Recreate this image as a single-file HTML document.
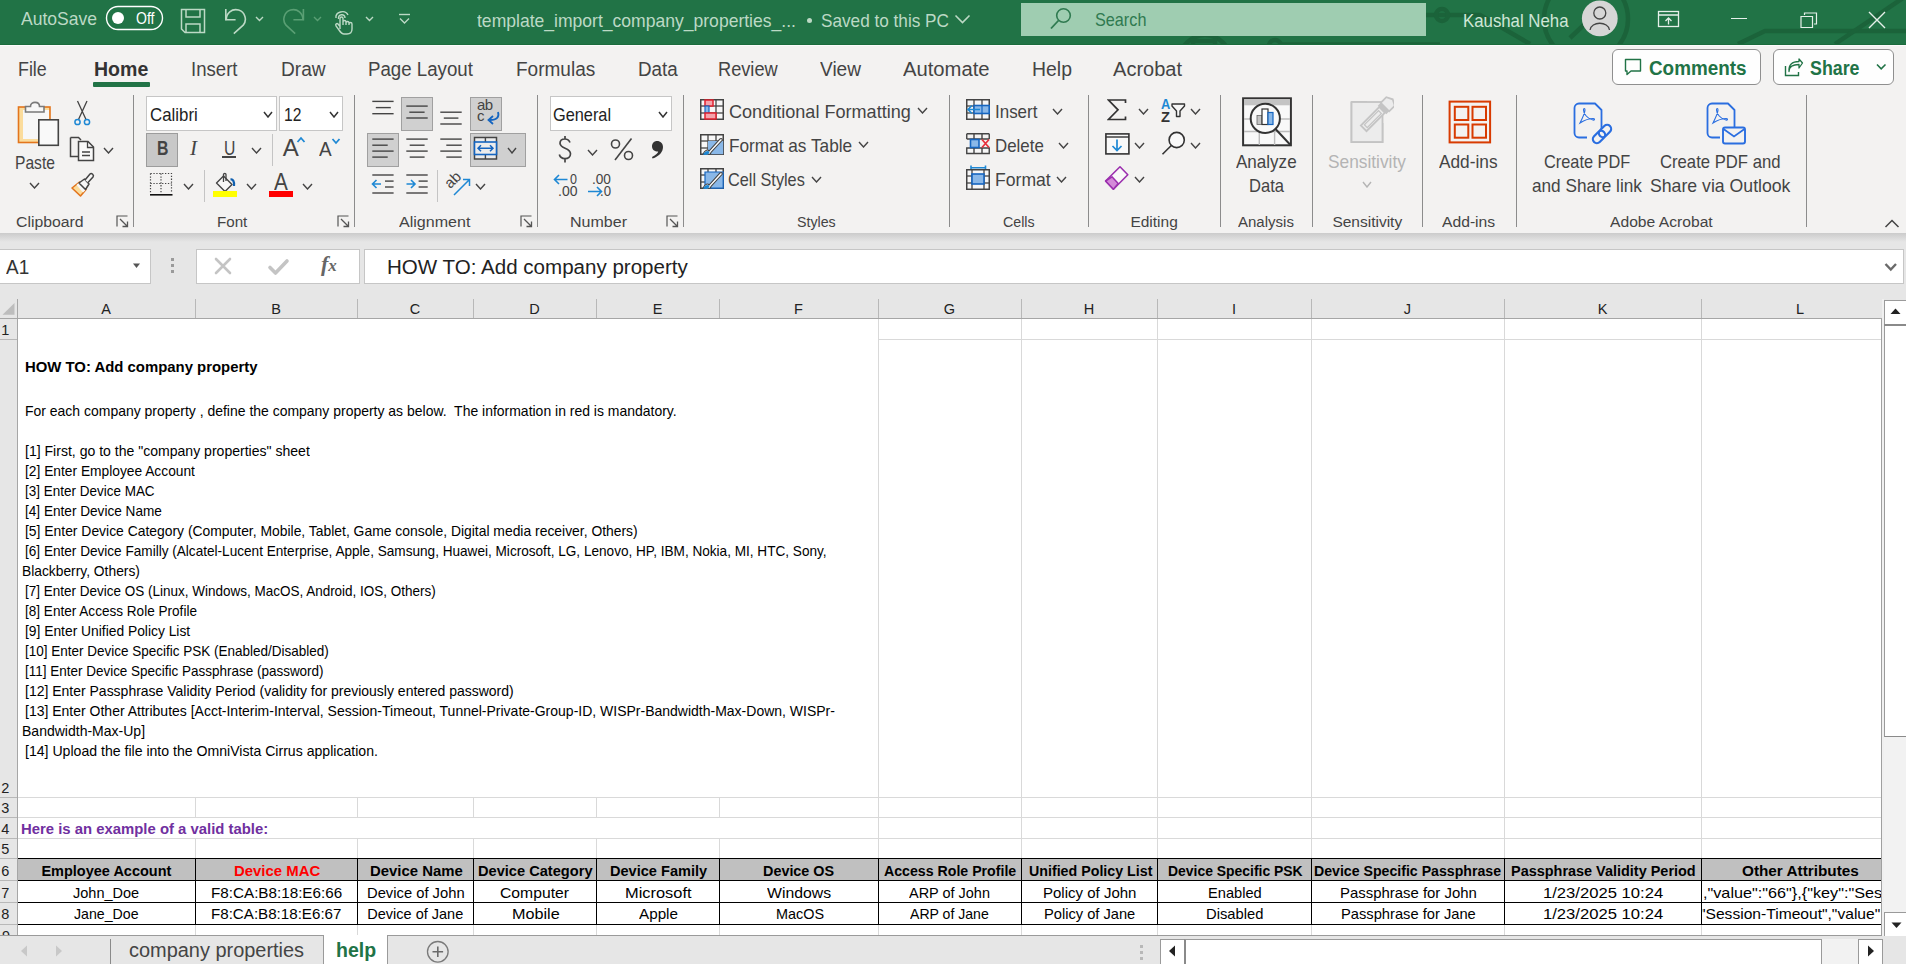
<!DOCTYPE html><html><head><meta charset="utf-8"><style>
*{margin:0;padding:0}
html,body{width:1906px;height:964px;overflow:hidden;background:#fff;position:relative}
body>div{position:absolute}
.t{position:absolute;white-space:pre;font-family:"Liberation Sans",sans-serif;transform-origin:0 0}
svg{position:absolute}
</style></head><body>
<div style="left:0px;top:0px;width:1906px;height:44px;background:#217346"></div>
<div style="left:0px;top:44px;width:1906px;height:1px;background:#1b6b3c"></div>
<div style="left:0px;top:45px;width:1906px;height:188px;background:#f3f2f1"></div>
<div style="left:0px;top:233px;width:1906px;height:9px;background:linear-gradient(#cbcbcb,#e6e6e6)"></div>
<div style="left:0px;top:242px;width:1906px;height:77px;background:#e6e6e6"></div>
<div style="left:0px;top:299px;width:1884px;height:20px;background:#e6e6e6"></div>
<div style="left:18px;top:319px;width:1863px;height:617px;background:#fff"></div>
<div style="left:0px;top:318px;width:1882px;height:1px;background:#a6a6a6"></div>
<div style="left:195px;top:299px;width:1px;height:19px;background:#b8b8b8"></div>
<div style="left:357px;top:299px;width:1px;height:19px;background:#b8b8b8"></div>
<div style="left:473px;top:299px;width:1px;height:19px;background:#b8b8b8"></div>
<div style="left:596px;top:299px;width:1px;height:19px;background:#b8b8b8"></div>
<div style="left:719px;top:299px;width:1px;height:19px;background:#b8b8b8"></div>
<div style="left:878px;top:299px;width:1px;height:19px;background:#b8b8b8"></div>
<div style="left:1021px;top:299px;width:1px;height:19px;background:#b8b8b8"></div>
<div style="left:1157px;top:299px;width:1px;height:19px;background:#b8b8b8"></div>
<div style="left:1311px;top:299px;width:1px;height:19px;background:#b8b8b8"></div>
<div style="left:1504px;top:299px;width:1px;height:19px;background:#b8b8b8"></div>
<div style="left:1701px;top:299px;width:1px;height:19px;background:#b8b8b8"></div>
<svg style="left:1px;top:302px" width="15" height="14"><path d="M13.5 1 L13.5 12.8 L1.5 12.8 Z" fill="#bdbdbd"/></svg>
<div style="left:0px;top:319px;width:17px;height:617px;background:#e6e6e6"></div>
<div style="left:17px;top:299px;width:1px;height:637px;background:#a6a6a6"></div>
<div style="left:0px;top:339px;width:17px;height:1px;background:#b8b8b8"></div>
<div style="left:0px;top:797px;width:17px;height:1px;background:#b8b8b8"></div>
<div style="left:0px;top:817px;width:17px;height:1px;background:#b8b8b8"></div>
<div style="left:0px;top:838px;width:17px;height:1px;background:#b8b8b8"></div>
<div style="left:0px;top:858px;width:17px;height:1px;background:#b8b8b8"></div>
<div style="left:0px;top:880px;width:17px;height:1px;background:#b8b8b8"></div>
<div style="left:0px;top:902px;width:17px;height:1px;background:#b8b8b8"></div>
<div style="left:0px;top:924px;width:17px;height:1px;background:#b8b8b8"></div>
<div style="left:878px;top:339px;width:1003px;height:1px;background:#d9d9d9"></div>
<div style="left:18px;top:797px;width:1863px;height:1px;background:#d9d9d9"></div>
<div style="left:18px;top:817px;width:1863px;height:1px;background:#d9d9d9"></div>
<div style="left:18px;top:838px;width:1863px;height:1px;background:#d9d9d9"></div>
<div style="left:18px;top:935px;width:0px;height:1px;background:#d9d9d9"></div>
<div style="left:195px;top:797px;width:1px;height:21px;background:#d9d9d9"></div>
<div style="left:195px;top:838px;width:1px;height:20px;background:#d9d9d9"></div>
<div style="left:195px;top:924px;width:1px;height:12px;background:#d9d9d9"></div>
<div style="left:357px;top:797px;width:1px;height:21px;background:#d9d9d9"></div>
<div style="left:357px;top:838px;width:1px;height:20px;background:#d9d9d9"></div>
<div style="left:357px;top:924px;width:1px;height:12px;background:#d9d9d9"></div>
<div style="left:473px;top:797px;width:1px;height:21px;background:#d9d9d9"></div>
<div style="left:473px;top:838px;width:1px;height:20px;background:#d9d9d9"></div>
<div style="left:473px;top:924px;width:1px;height:12px;background:#d9d9d9"></div>
<div style="left:596px;top:797px;width:1px;height:21px;background:#d9d9d9"></div>
<div style="left:596px;top:838px;width:1px;height:20px;background:#d9d9d9"></div>
<div style="left:596px;top:924px;width:1px;height:12px;background:#d9d9d9"></div>
<div style="left:719px;top:797px;width:1px;height:21px;background:#d9d9d9"></div>
<div style="left:719px;top:838px;width:1px;height:20px;background:#d9d9d9"></div>
<div style="left:719px;top:924px;width:1px;height:12px;background:#d9d9d9"></div>
<div style="left:878px;top:319px;width:1px;height:539px;background:#d9d9d9"></div>
<div style="left:878px;top:924px;width:1px;height:12px;background:#d9d9d9"></div>
<div style="left:1021px;top:319px;width:1px;height:539px;background:#d9d9d9"></div>
<div style="left:1021px;top:924px;width:1px;height:12px;background:#d9d9d9"></div>
<div style="left:1157px;top:319px;width:1px;height:539px;background:#d9d9d9"></div>
<div style="left:1157px;top:924px;width:1px;height:12px;background:#d9d9d9"></div>
<div style="left:1311px;top:319px;width:1px;height:539px;background:#d9d9d9"></div>
<div style="left:1311px;top:924px;width:1px;height:12px;background:#d9d9d9"></div>
<div style="left:1504px;top:319px;width:1px;height:539px;background:#d9d9d9"></div>
<div style="left:1504px;top:924px;width:1px;height:12px;background:#d9d9d9"></div>
<div style="left:1701px;top:319px;width:1px;height:539px;background:#d9d9d9"></div>
<div style="left:1701px;top:924px;width:1px;height:12px;background:#d9d9d9"></div>
<div style="left:1881px;top:319px;width:1px;height:617px;background:#a0a0a0"></div>
<div style="left:1882px;top:299px;width:2px;height:637px;background:#f0f0f0"></div>
<div style="left:18px;top:858px;width:1863px;height:22px;background:#c0c0c0"></div>
<div style="left:18px;top:858px;width:1863px;height:1px;background:#000"></div>
<div style="left:18px;top:880px;width:1863px;height:1px;background:#000"></div>
<div style="left:18px;top:902px;width:1863px;height:1px;background:#000"></div>
<div style="left:18px;top:924px;width:1863px;height:1px;background:#000"></div>
<div style="left:195px;top:858px;width:1px;height:67px;background:#000"></div>
<div style="left:357px;top:858px;width:1px;height:67px;background:#000"></div>
<div style="left:473px;top:858px;width:1px;height:67px;background:#000"></div>
<div style="left:596px;top:858px;width:1px;height:67px;background:#000"></div>
<div style="left:719px;top:858px;width:1px;height:67px;background:#000"></div>
<div style="left:878px;top:858px;width:1px;height:67px;background:#000"></div>
<div style="left:1021px;top:858px;width:1px;height:67px;background:#000"></div>
<div style="left:1157px;top:858px;width:1px;height:67px;background:#000"></div>
<div style="left:1311px;top:858px;width:1px;height:67px;background:#000"></div>
<div style="left:1504px;top:858px;width:1px;height:67px;background:#000"></div>
<div style="left:1701px;top:858px;width:1px;height:67px;background:#000"></div>
<div style="left:0px;top:935px;width:1882px;height:1px;background:#c6c6c6"></div>
<div style="left:1884px;top:300px;width:22px;height:636px;background:#f2f2f2"></div>
<div style="left:1884px;top:300px;width:22px;height:25px;background:#fff;border-left:1px solid #9a9a9a;border-top:1px solid #9a9a9a;box-sizing:border-box"></div>
<div style="left:1884px;top:324px;width:22px;height:2px;background:#8a8a8a"></div>
<div style="left:1884px;top:326px;width:22px;height:411px;background:#fff;border-left:1px solid #9a9a9a;border-bottom:1px solid #8a8a8a;box-sizing:border-box"></div>
<div style="left:1884px;top:912px;width:22px;height:24px;background:#fff;border-left:1px solid #9a9a9a;border-top:1px solid #9a9a9a;box-sizing:border-box"></div>
<svg style="left:1890px;top:308px" width="12" height="7"><path d="M0.5 6 L5.5 0.5 L10.5 6 Z" fill="#222"/></svg>
<svg style="left:1891px;top:922px" width="12" height="7"><path d="M0.5 0.5 L10.5 0.5 L5.5 6 Z" fill="#222"/></svg>
<div style="left:0px;top:936px;width:1906px;height:28px;background:#e6e6e6"></div>
<div class="t" style="left:101.15px;top:302.00px;font-size:14.5px;line-height:14.5px;color:#222;">A</div>
<div class="t" style="left:271.15px;top:302.00px;font-size:14.5px;line-height:14.5px;color:#222;">B</div>
<div class="t" style="left:409.75px;top:302.00px;font-size:14.5px;line-height:14.5px;color:#222;">C</div>
<div class="t" style="left:529.25px;top:302.00px;font-size:14.5px;line-height:14.5px;color:#222;">D</div>
<div class="t" style="left:652.65px;top:302.00px;font-size:14.5px;line-height:14.5px;color:#222;">E</div>
<div class="t" style="left:794.05px;top:302.00px;font-size:14.5px;line-height:14.5px;color:#222;">F</div>
<div class="t" style="left:943.85px;top:302.00px;font-size:14.5px;line-height:14.5px;color:#222;">G</div>
<div class="t" style="left:1083.75px;top:302.00px;font-size:14.5px;line-height:14.5px;color:#222;">H</div>
<div class="t" style="left:1232.00px;top:302.00px;font-size:14.5px;line-height:14.5px;color:#222;">I</div>
<div class="t" style="left:1403.85px;top:302.00px;font-size:14.5px;line-height:14.5px;color:#222;">J</div>
<div class="t" style="left:1597.65px;top:302.00px;font-size:14.5px;line-height:14.5px;color:#222;">K</div>
<div class="t" style="left:1795.95px;top:302.00px;font-size:14.5px;line-height:14.5px;color:#222;">L</div>
<div class="t" style="left:1.30px;top:323.00px;font-size:14.5px;line-height:14.5px;color:#222;">1</div>
<div class="t" style="left:1.30px;top:781.00px;font-size:14.5px;line-height:14.5px;color:#222;">2</div>
<div class="t" style="left:1.30px;top:801.00px;font-size:14.5px;line-height:14.5px;color:#222;">3</div>
<div class="t" style="left:1.30px;top:822.00px;font-size:14.5px;line-height:14.5px;color:#222;">4</div>
<div class="t" style="left:1.30px;top:842.00px;font-size:14.5px;line-height:14.5px;color:#222;">5</div>
<div class="t" style="left:1.30px;top:864.00px;font-size:14.5px;line-height:14.5px;color:#222;">6</div>
<div class="t" style="left:1.30px;top:886.00px;font-size:14.5px;line-height:14.5px;color:#222;">7</div>
<div class="t" style="left:1.30px;top:907.00px;font-size:14.5px;line-height:14.5px;color:#222;">8</div>
<div style="left:0;top:924px;width:17px;height:11px;overflow:hidden"><div class="t" style="left:2px;top:5px;font-size:14.5px;line-height:14.5px;color:#222">9</div></div>
<div class="t" style="left:25.30px;top:360.00px;font-size:14.5px;line-height:14.5px;color:#000; font-weight:700;transform:scaleX(1.0269);">HOW TO: Add company property</div>
<div class="t" style="left:25.30px;top:404.00px;font-size:14.5px;line-height:14.5px;color:#000;transform:scaleX(0.9633);">For each company property , define the company property as below.  The information in red is mandatory.</div>
<div class="t" style="left:24.50px;top:444.00px;font-size:14.5px;line-height:14.5px;color:#000;transform:scaleX(0.9687);">[1] First, go to the "company properties" sheet</div>
<div class="t" style="left:24.50px;top:464.00px;font-size:14.5px;line-height:14.5px;color:#000;transform:scaleX(0.9497);">[2] Enter Employee Account</div>
<div class="t" style="left:24.50px;top:484.00px;font-size:14.5px;line-height:14.5px;color:#000;transform:scaleX(0.9297);">[3] Enter Device MAC</div>
<div class="t" style="left:24.50px;top:504.00px;font-size:14.5px;line-height:14.5px;color:#000;transform:scaleX(0.9383);">[4] Enter Device Name</div>
<div class="t" style="left:24.50px;top:524.00px;font-size:14.5px;line-height:14.5px;color:#000;transform:scaleX(0.9579);">[5] Enter Device Category (Computer, Mobile, Tablet, Game console, Digital media receiver, Others)</div>
<div class="t" style="left:24.50px;top:544.00px;font-size:14.5px;line-height:14.5px;color:#000;transform:scaleX(0.9372);">[6] Enter Device Familly (Alcatel-Lucent Enterprise, Apple, Samsung, Huawei, Microsoft, LG, Lenovo, HP, IBM, Nokia, MI, HTC, Sony,</div>
<div class="t" style="left:21.50px;top:564.00px;font-size:14.5px;line-height:14.5px;color:#000;transform:scaleX(0.9523);">Blackberry, Others)</div>
<div class="t" style="left:24.50px;top:584.00px;font-size:14.5px;line-height:14.5px;color:#000;transform:scaleX(0.9303);">[7] Enter Device OS (Linux, Windows, MacOS, Android, IOS, Others)</div>
<div class="t" style="left:24.50px;top:604.00px;font-size:14.5px;line-height:14.5px;color:#000;transform:scaleX(0.9358);">[8] Enter Access Role Profile</div>
<div class="t" style="left:24.50px;top:624.00px;font-size:14.5px;line-height:14.5px;color:#000;transform:scaleX(0.9533);">[9] Enter Unified Policy List</div>
<div class="t" style="left:24.50px;top:644.00px;font-size:14.5px;line-height:14.5px;color:#000;transform:scaleX(0.9308);">[10] Enter Device Specific PSK (Enabled/Disabled)</div>
<div class="t" style="left:24.50px;top:664.00px;font-size:14.5px;line-height:14.5px;color:#000;transform:scaleX(0.9293);">[11] Enter Device Specific Passphrase (password)</div>
<div class="t" style="left:24.50px;top:684.00px;font-size:14.5px;line-height:14.5px;color:#000;transform:scaleX(0.9645);">[12] Enter Passphrase Validity Period (validity for previously entered password)</div>
<div class="t" style="left:24.50px;top:704.00px;font-size:14.5px;line-height:14.5px;color:#000;transform:scaleX(0.9652);">[13] Enter Other Attributes [Acct-Interim-Interval, Session-Timeout, Tunnel-Private-Group-ID, WISPr-Bandwidth-Max-Down, WISPr-</div>
<div class="t" style="left:21.50px;top:724.00px;font-size:14.5px;line-height:14.5px;color:#000;transform:scaleX(0.9662);">Bandwidth-Max-Up]</div>
<div class="t" style="left:24.50px;top:744.00px;font-size:14.5px;line-height:14.5px;color:#000;transform:scaleX(0.9716);">[14] Upload the file into the OmniVista Cirrus application.</div>
<div class="t" style="left:21.20px;top:822.00px;font-size:14.5px;line-height:14.5px;color:#7030a0; font-weight:700;transform:scaleX(1.0257);">Here is an example of a valid table:</div>
<div class="t" style="left:41.40px;top:864.00px;font-size:14.5px;line-height:14.5px;color:#000; font-weight:700;">Employee Account</div>
<div class="t" style="left:234.00px;top:864.00px;font-size:14.5px;line-height:14.5px;color:#ff0000; font-weight:700;transform:scaleX(1.0286);">Device MAC</div>
<div class="t" style="left:369.70px;top:864.00px;font-size:14.5px;line-height:14.5px;color:#000; font-weight:700;transform:scaleX(1.0277);">Device Name</div>
<div class="t" style="left:478.20px;top:864.00px;font-size:14.5px;line-height:14.5px;color:#000; font-weight:700;transform:scaleX(1.0079);">Device Category</div>
<div class="t" style="left:609.60px;top:864.00px;font-size:14.5px;line-height:14.5px;color:#000; font-weight:700;transform:scaleX(1.0041);">Device Family</div>
<div class="t" style="left:763.40px;top:864.00px;font-size:14.5px;line-height:14.5px;color:#000; font-weight:700;transform:scaleX(0.9916);">Device OS</div>
<div class="t" style="left:884.10px;top:864.00px;font-size:14.5px;line-height:14.5px;color:#000; font-weight:700;transform:scaleX(0.9764);">Access Role Profile</div>
<div class="t" style="left:1028.50px;top:864.00px;font-size:14.5px;line-height:14.5px;color:#000; font-weight:700;transform:scaleX(0.9817);">Unified Policy List</div>
<div class="t" style="left:1167.60px;top:864.00px;font-size:14.5px;line-height:14.5px;color:#000; font-weight:700;transform:scaleX(0.9601);">Device Specific PSK</div>
<div class="t" style="left:1314.30px;top:864.00px;font-size:14.5px;line-height:14.5px;color:#000; font-weight:700;transform:scaleX(0.9750);">Device Specific Passphrase</div>
<div class="t" style="left:1510.50px;top:864.00px;font-size:14.5px;line-height:14.5px;color:#000; font-weight:700;transform:scaleX(0.9962);">Passphrase Validity Period</div>
<div class="t" style="left:1742.00px;top:864.00px;font-size:14.5px;line-height:14.5px;color:#000; font-weight:700;transform:scaleX(1.0552);">Other Attributes</div>
<div class="t" style="left:73.00px;top:886.00px;font-size:14.5px;line-height:14.5px;color:#000;">John_Doe</div>
<div class="t" style="left:211.40px;top:886.00px;font-size:14.5px;line-height:14.5px;color:#000;transform:scaleX(1.0496);">F8:CA:B8:18:E6:66</div>
<div class="t" style="left:366.50px;top:886.00px;font-size:14.5px;line-height:14.5px;color:#000;transform:scaleX(1.0177);">Device of John</div>
<div class="t" style="left:500.20px;top:886.00px;font-size:14.5px;line-height:14.5px;color:#000;transform:scaleX(1.0832);">Computer</div>
<div class="t" style="left:624.90px;top:886.00px;font-size:14.5px;line-height:14.5px;color:#000;transform:scaleX(1.1310);">Microsoft</div>
<div class="t" style="left:767.30px;top:886.00px;font-size:14.5px;line-height:14.5px;color:#000;transform:scaleX(1.0901);">Windows</div>
<div class="t" style="left:909.30px;top:886.00px;font-size:14.5px;line-height:14.5px;color:#000;transform:scaleX(0.9975);">ARP of John</div>
<div class="t" style="left:1042.80px;top:886.00px;font-size:14.5px;line-height:14.5px;color:#000;transform:scaleX(1.0354);">Policy of John</div>
<div class="t" style="left:1207.70px;top:886.00px;font-size:14.5px;line-height:14.5px;color:#000;transform:scaleX(1.0094);">Enabled</div>
<div class="t" style="left:1339.70px;top:886.00px;font-size:14.5px;line-height:14.5px;color:#000;transform:scaleX(1.0286);">Passphrase for John</div>
<div class="t" style="left:1543.20px;top:886.00px;font-size:14.5px;line-height:14.5px;color:#000;transform:scaleX(1.1469);">1/23/2025 10:24</div>
<div class="t" style="left:74.00px;top:907.00px;font-size:14.5px;line-height:14.5px;color:#000;transform:scaleX(0.9758);">Jane_Doe</div>
<div class="t" style="left:211.40px;top:907.00px;font-size:14.5px;line-height:14.5px;color:#000;transform:scaleX(1.0440);">F8:CA:B8:18:E6:67</div>
<div class="t" style="left:367.30px;top:907.00px;font-size:14.5px;line-height:14.5px;color:#000;">Device of Jane</div>
<div class="t" style="left:511.60px;top:907.00px;font-size:14.5px;line-height:14.5px;color:#000;transform:scaleX(1.1171);">Mobile</div>
<div class="t" style="left:638.60px;top:907.00px;font-size:14.5px;line-height:14.5px;color:#000;transform:scaleX(1.0512);">Apple</div>
<div class="t" style="left:775.70px;top:907.00px;font-size:14.5px;line-height:14.5px;color:#000;transform:scaleX(0.9938);">MacOS</div>
<div class="t" style="left:910.30px;top:907.00px;font-size:14.5px;line-height:14.5px;color:#000;transform:scaleX(0.9704);">ARP of Jane</div>
<div class="t" style="left:1044.00px;top:907.00px;font-size:14.5px;line-height:14.5px;color:#000;transform:scaleX(1.0111);">Policy of Jane</div>
<div class="t" style="left:1205.70px;top:907.00px;font-size:14.5px;line-height:14.5px;color:#000;transform:scaleX(1.0177);">Disabled</div>
<div class="t" style="left:1340.70px;top:907.00px;font-size:14.5px;line-height:14.5px;color:#000;transform:scaleX(1.0135);">Passphrase for Jane</div>
<div class="t" style="left:1543.20px;top:907.00px;font-size:14.5px;line-height:14.5px;color:#000;transform:scaleX(1.1469);">1/23/2025 10:24</div>
<div style="left:1702px;top:881px;width:179px;height:43px;overflow:hidden">
<div class="t" style="left:0.90px;top:5.00px;font-size:14.5px;line-height:14.5px;color:#000;transform:scaleX(1.1180);">,"value":"66"},{"key":"Ses</div>
<div class="t" style="left:-2.50px;top:26.00px;font-size:14.5px;line-height:14.5px;color:#000;transform:scaleX(1.0758);">"Session-Timeout","value"</div>
</div>
<div style="left:0px;top:935px;width:1882px;height:1px;background:#9a9a9a"></div>
<svg style="left:20px;top:945px" width="46" height="14"><path d="M27 0.5 L21 6 L27 11.5 Z" transform="translate(-20,0)" fill="#c8c8c8"/><path d="M36 0.5 L42 6 L36 11.5 Z" fill="#c8c8c8"/></svg>
<div style="left:110px;top:939px;width:1px;height:25px;background:#8a8a8a"></div>
<div style="left:324px;top:936px;width:63px;height:28px;background:#fff"></div>
<div style="left:323px;top:935px;width:1px;height:29px;background:#9a9a9a"></div>
<div style="left:387px;top:935px;width:1px;height:29px;background:#9a9a9a"></div>
<div style="left:324px;top:935px;width:63px;height:1px;background:#fff"></div>
<div class="t" style="left:128.90px;top:940.00px;font-size:20px;line-height:20px;color:#444;transform:scaleX(0.9966);">company properties</div>
<div class="t" style="left:335.70px;top:940.00px;font-size:20px;line-height:20px;color:#217346; font-weight:700;transform:scaleX(0.9757);">help</div>
<svg style="left:425px;top:939px" width="26" height="26"><circle cx="12.8" cy="12.8" r="10.3" fill="none" stroke="#7a7a7a" stroke-width="1.3"/><path d="M12.8 7.5 V18.1 M7.5 12.8 H18.1" stroke="#6a6a6a" stroke-width="1.6"/></svg>
<div style="left:1140px;top:945px;width:3px;height:3px;background:#b8b8b8"></div>
<div style="left:1140px;top:951px;width:3px;height:3px;background:#b8b8b8"></div>
<div style="left:1140px;top:957px;width:3px;height:3px;background:#b8b8b8"></div>
<div style="left:1160px;top:939px;width:723px;height:25px;background:#f2f2f2"></div>
<div style="left:1160px;top:939px;width:25px;height:25px;background:#fff;border:1px solid #9a9a9a;border-bottom:0;box-sizing:border-box"></div>
<div style="left:1184px;top:939px;width:638px;height:25px;background:#fff;border:1px solid #9a9a9a;border-left:2px solid #8a8a8a;border-bottom:0;box-sizing:border-box"></div>
<div style="left:1858px;top:939px;width:25px;height:25px;background:#fff;border:1px solid #9a9a9a;border-bottom:0;box-sizing:border-box"></div>
<svg style="left:1168px;top:945px" width="10" height="13"><path d="M7 0.5 V11.5 L1 6 Z" fill="#222"/></svg>
<svg style="left:1867px;top:945px" width="10" height="13"><path d="M1 0.5 V11.5 L7 6 Z" fill="#222"/></svg>
<div style="left:-1px;top:249px;width:152px;height:35px;background:#fff;border:1px solid #c6c6c6;box-sizing:border-box"></div>
<div class="t" style="left:5.90px;top:258.00px;font-size:19.5px;line-height:19.5px;color:#333;transform:scaleX(0.9707);">A1</div>
<svg style="left:133px;top:263px" width="8" height="6"><path d="M0 0.5 H7 L3.5 5 Z" fill="#555"/></svg>
<div style="left:171px;top:258px;width:3px;height:3px;background:#9a9a9a"></div>
<div style="left:171px;top:264px;width:3px;height:3px;background:#9a9a9a"></div>
<div style="left:171px;top:270px;width:3px;height:3px;background:#9a9a9a"></div>
<div style="left:196px;top:249px;width:164px;height:35px;background:#fff;border:1px solid #c6c6c6;box-sizing:border-box"></div>
<svg style="left:213px;top:256px" width="22" height="20"><path d="M3 3 L17 17 M17 3 L3 17" stroke="#c4c4c4" stroke-width="2.6" stroke-linecap="round"/></svg>
<svg style="left:267px;top:257px" width="24" height="20"><path d="M3 10.5 L8.5 16 L20 4" stroke="#c4c4c4" stroke-width="3.6" fill="none" stroke-linecap="round" stroke-linejoin="round"/></svg>
<div class="t" style="left:321px;top:253px;font-family:'Liberation Serif',serif;font-style:italic;font-size:22px;line-height:22px;color:#666;font-weight:700">f<span style="font-size:17px">x</span></div>
<div style="left:364px;top:249px;width:1540px;height:35px;background:#fff;border:1px solid #c6c6c6;box-sizing:border-box"></div>
<div class="t" style="left:386.70px;top:258.00px;font-size:19.5px;line-height:19.5px;color:#222;transform:scaleX(1.0540);">HOW TO: Add company property</div>
<svg style="left:1884px;top:262px" width="14" height="11"><path d="M1.5 2 L6.8 7.5 L12 2" stroke="#6a6a6a" stroke-width="2.4" fill="none"/></svg>
<svg style="left:1420px;top:0" width="486" height="44"><g stroke="#1b633a" stroke-width="4.5" fill="none"><path d="M0 15 H60 L110 44"/><circle cx="22" cy="15" r="6"/><circle cx="166" cy="19" r="42"/><path d="M150 38 L185 5"/><path d="M318 44 L345 31 H486"/><path d="M415 44 L486 -4"/></g></svg>
<div class="t" style="left:21.00px;top:10.00px;font-size:18.5px;line-height:18.5px;color:#bcd9c5;transform:scaleX(0.9476);">AutoSave</div>
<svg style="left:105px;top:5px" width="60" height="27"><rect x="1.5" y="1.5" width="56" height="23" rx="11.5" fill="none" stroke="#fff" stroke-width="1.4"/><circle cx="13" cy="13" r="6" fill="#fff"/></svg>
<div class="t" style="left:135.50px;top:11.00px;font-size:16px;line-height:16px;color:#fff;transform:scaleX(0.8768);">Off</div>
<svg style="left:180px;top:8px" width="27" height="27"><path d="M1.5 1.5 H24.5 V24.5 H5 L1.5 21 Z M6 1.5 V9 H20 V1.5 M6 24.5 V16 H20 V24.5" fill="none" stroke="#bcd9c5" stroke-width="1.5"/></svg>
<svg style="left:223px;top:8px" width="26" height="27"><path d="M2.8 1 V11.7 H12.6" fill="none" stroke="#bcd9c5" stroke-width="1.6"/><path d="M3.4 12.2 A9.5 9.5 0 1 1 20.2 17.2 L10.8 25.6" fill="none" stroke="#bcd9c5" stroke-width="1.6"/></svg>
<svg style="left:255px;top:16px" width="10" height="7"><path d="M1 1 L4.5 4.5 L8 1" fill="none" stroke="#bcd9c5" stroke-width="1.4"/></svg>
<svg style="left:281px;top:8px" width="26" height="27"><path d="M22.4 1 V11.7 H12.4" fill="none" stroke="#5a9f74" stroke-width="1.6"/><path d="M21.8 12.2 A9.5 9.5 0 1 0 5 17.2 L14.2 25.6" fill="none" stroke="#5a9f74" stroke-width="1.6"/></svg>
<svg style="left:313px;top:16px" width="10" height="7"><path d="M1 1 L4.5 4.5 L8 1" fill="none" stroke="#5a9f74" stroke-width="1.4"/></svg>
<svg style="left:333px;top:8px" width="22" height="27"><path d="M3 10 C2 4 12 1 15 7 M5.5 11 C5 6 12 5 12 10" fill="none" stroke="#bcd9c5" stroke-width="1.4"/><path d="M7 21 V10.5 C7 8.5 10 8.5 10 10.5 V17 M10 14 C10 12 13 12 13 14 V17 M13 15 C13 13 16 13 16 15 V17 M16 16 C16 14 19 14 19 16 V21 C19 24 17 26 14 26 H11 C9 26 8 25 6 22 L3 18 C2 16 4 15 5 16 L7 18.5" fill="none" stroke="#bcd9c5" stroke-width="1.4"/></svg>
<svg style="left:365px;top:16px" width="10" height="7"><path d="M1 1 L4.5 4.5 L8 1" fill="none" stroke="#bcd9c5" stroke-width="1.4"/></svg>
<svg style="left:398px;top:13px" width="14" height="13"><path d="M1 1.5 H12" stroke="#bcd9c5" stroke-width="1.4"/><path d="M2 5.5 L6.5 10 L11 5.5" fill="none" stroke="#bcd9c5" stroke-width="1.4"/></svg>
<div class="t" style="left:477.40px;top:11.00px;font-size:19px;line-height:19px;color:#bcd9c5;transform:scaleX(0.9235);">template_import_company_properties_...</div>
<div style="left:807px;top:18px;width:5px;height:5px;background:#bcd9c5;border-radius:50%"></div>
<div class="t" style="left:820.80px;top:11.00px;font-size:19px;line-height:19px;color:#bcd9c5;transform:scaleX(0.9039);">Saved to this PC</div>
<svg style="left:954px;top:14px" width="18" height="11"><path d="M1.5 1.5 L8.5 8.5 L15.5 1.5" fill="none" stroke="#bcd9c5" stroke-width="1.6"/></svg>
<svg style="left:1150px;top:30px" width="290" height="14"><g stroke="#1b633a" stroke-width="4.5" fill="none"><circle cx="55" cy="30" r="25"/><rect x="43" y="11" width="22" height="10"/><circle cx="125" cy="16" r="6"/><path d="M130 14.5 H290"/></g></svg>
<div style="left:1021px;top:3px;width:405px;height:33px;background:#9fcdb1"></div>
<svg style="left:1049px;top:7px" width="24" height="24"><circle cx="14.5" cy="8.5" r="6.8" fill="none" stroke="#2f7a50" stroke-width="1.6"/><path d="M9.5 13.5 L2 21.5" stroke="#2f7a50" stroke-width="1.8"/></svg>
<div class="t" style="left:1095.00px;top:11.00px;font-size:18.5px;line-height:18.5px;color:#2f7a50;transform:scaleX(0.8771);">Search</div>
<div class="t" style="left:1462.50px;top:12.00px;font-size:18.5px;line-height:18.5px;color:#cfe6d6;transform:scaleX(0.9079);">Kaushal Neha</div>
<svg style="left:1581px;top:0px" width="38" height="38"><circle cx="18.8" cy="18.4" r="17.9" fill="#d6d6d6"/><circle cx="18.8" cy="13" r="6" fill="none" stroke="#444" stroke-width="1.3"/><path d="M9 30 C10 21 27.5 21 28.5 30" fill="none" stroke="#444" stroke-width="1.3"/></svg>
<svg style="left:1657px;top:10px" width="24" height="18"><rect x="1.5" y="1.5" width="20" height="15" fill="none" stroke="#e6f0ea" stroke-width="1.3"/><path d="M1.5 5 H21.5 M11.5 14.5 V8 M8.5 11 L11.5 8 L14.5 11" fill="none" stroke="#e6f0ea" stroke-width="1.3"/></svg>
<div style="left:1731px;top:18px;width:16px;height:1px;background:#e6f0ea"></div>
<svg style="left:1800px;top:11px" width="19" height="18"><path d="M1 5.5 H12.5 V16.5 H1 Z" fill="none" stroke="#e6f0ea" stroke-width="1.2"/><path d="M4.5 4 V2 H16.5 V13 H14" fill="none" stroke="#e6f0ea" stroke-width="1.2"/></svg>
<svg style="left:1868px;top:11px" width="18" height="18"><path d="M1 1 L17 17 M17 1 L1 17" stroke="#e6f0ea" stroke-width="1.4"/></svg>
<div style="left:0px;top:45px;width:1906px;height:1px;background:#fbfbfb"></div>
<div class="t" style="left:17.90px;top:59.00px;font-size:20px;line-height:20px;color:#444;transform:scaleX(0.8913);">File</div>
<div class="t" style="left:191.00px;top:59.00px;font-size:20px;line-height:20px;color:#444;transform:scaleX(0.9300);">Insert</div>
<div class="t" style="left:280.80px;top:59.00px;font-size:20px;line-height:20px;color:#444;transform:scaleX(0.9572);">Draw</div>
<div class="t" style="left:367.50px;top:59.00px;font-size:20px;line-height:20px;color:#444;transform:scaleX(0.9341);">Page Layout</div>
<div class="t" style="left:516.40px;top:59.00px;font-size:20px;line-height:20px;color:#444;transform:scaleX(0.9508);">Formulas</div>
<div class="t" style="left:637.60px;top:59.00px;font-size:20px;line-height:20px;color:#444;transform:scaleX(0.9409);">Data</div>
<div class="t" style="left:718.40px;top:59.00px;font-size:20px;line-height:20px;color:#444;transform:scaleX(0.9101);">Review</div>
<div class="t" style="left:820.30px;top:59.00px;font-size:20px;line-height:20px;color:#444;transform:scaleX(0.9535);">View</div>
<div class="t" style="left:903.10px;top:59.00px;font-size:20px;line-height:20px;color:#444;transform:scaleX(1.0117);">Automate</div>
<div class="t" style="left:1032.30px;top:59.00px;font-size:20px;line-height:20px;color:#444;transform:scaleX(0.9708);">Help</div>
<div class="t" style="left:1113.10px;top:59.00px;font-size:20px;line-height:20px;color:#444;">Acrobat</div>
<div class="t" style="left:93.90px;top:59.00px;font-size:20px;line-height:20px;color:#333; font-weight:700;transform:scaleX(0.9766);">Home</div>
<div style="left:93px;top:82px;width:57px;height:5px;background:#217346;border-radius:1px"></div>
<div style="left:1612px;top:49px;width:149px;height:36px;background:#fefefe;border:1px solid #8f8f8f;border-radius:6px;box-sizing:border-box"></div>
<div style="left:1773px;top:49px;width:121px;height:36px;background:#fefefe;border:1px solid #8f8f8f;border-radius:6px;box-sizing:border-box"></div>
<svg style="left:1624px;top:58px" width="19" height="19"><path d="M1.5 1.5 H16.5 V13 H7 L3 16.5 V13 H1.5 Z" fill="none" stroke="#217346" stroke-width="1.4" stroke-linejoin="round"/></svg>
<div class="t" style="left:1648.60px;top:58.00px;font-size:20px;line-height:20px;color:#217346; font-weight:700;transform:scaleX(0.9429);">Comments</div>
<svg style="left:1784px;top:58px" width="20" height="20"><path d="M1.5 8 V17.5 H14.5 V14" fill="none" stroke="#217346" stroke-width="1.4"/><path d="M5 13.5 C5 8 9 6.5 15 6.5 V10 L18.5 5 L15 1 V3.5 C8 3.5 4.5 7 5 13.5 Z" fill="none" stroke="#217346" stroke-width="1.3" stroke-linejoin="round"/></svg>
<div class="t" style="left:1809.50px;top:58.00px;font-size:20px;line-height:20px;color:#217346; font-weight:700;transform:scaleX(0.8903);">Share</div>
<svg style="left:1876px;top:63px" width="11" height="8"><path d="M1 1.5 L5.2 5.8 L9.5 1.5" fill="none" stroke="#217346" stroke-width="1.6"/></svg>
<div style="left:133px;top:95px;width:1px;height:132px;background:#8c8c8c"></div>
<div style="left:354px;top:95px;width:1px;height:132px;background:#8c8c8c"></div>
<div style="left:537px;top:95px;width:1px;height:132px;background:#8c8c8c"></div>
<div style="left:683px;top:95px;width:1px;height:132px;background:#8c8c8c"></div>
<div style="left:949px;top:95px;width:1px;height:132px;background:#8c8c8c"></div>
<div style="left:1088px;top:95px;width:1px;height:132px;background:#8c8c8c"></div>
<div style="left:1220px;top:95px;width:1px;height:132px;background:#8c8c8c"></div>
<div style="left:1312px;top:95px;width:1px;height:132px;background:#8c8c8c"></div>
<div style="left:1422px;top:95px;width:1px;height:132px;background:#8c8c8c"></div>
<div style="left:1516px;top:95px;width:1px;height:132px;background:#8c8c8c"></div>
<div style="left:1806px;top:95px;width:1px;height:132px;background:#8c8c8c"></div>
<div class="t" style="left:16.20px;top:214.00px;font-size:15.5px;line-height:15.5px;color:#444;transform:scaleX(1.0196);">Clipboard</div>
<div class="t" style="left:216.70px;top:214.00px;font-size:15.5px;line-height:15.5px;color:#444;transform:scaleX(0.9774);">Font</div>
<div class="t" style="left:398.60px;top:214.00px;font-size:15.5px;line-height:15.5px;color:#444;transform:scaleX(1.0363);">Alignment</div>
<div class="t" style="left:569.50px;top:214.00px;font-size:15.5px;line-height:15.5px;color:#444;transform:scaleX(1.0345);">Number</div>
<div class="t" style="left:796.50px;top:214.00px;font-size:15.5px;line-height:15.5px;color:#444;transform:scaleX(0.9171);">Styles</div>
<div class="t" style="left:1002.50px;top:214.00px;font-size:15.5px;line-height:15.5px;color:#444;transform:scaleX(0.9188);">Cells</div>
<div class="t" style="left:1130.40px;top:214.00px;font-size:15.5px;line-height:15.5px;color:#444;">Editing</div>
<div class="t" style="left:1238.40px;top:214.00px;font-size:15.5px;line-height:15.5px;color:#444;transform:scaleX(0.9688);">Analysis</div>
<div class="t" style="left:1332.40px;top:214.00px;font-size:15.5px;line-height:15.5px;color:#444;">Sensitivity</div>
<div class="t" style="left:1442.30px;top:214.00px;font-size:15.5px;line-height:15.5px;color:#444;transform:scaleX(1.0114);">Add-ins</div>
<div class="t" style="left:1610.30px;top:214.00px;font-size:15.5px;line-height:15.5px;color:#444;transform:scaleX(1.0098);">Adobe Acrobat</div>
<svg style="left:115.5px;top:214.5px" width="14" height="13"><path d="M1 11.5 V1 H11.5" fill="none" stroke="#555" stroke-width="1.2"/><path d="M4 4 L11.5 11.5 M6.5 11.5 H11.5 V6.5" fill="none" stroke="#555" stroke-width="1.3"/></svg>
<svg style="left:336.5px;top:214.5px" width="14" height="13"><path d="M1 11.5 V1 H11.5" fill="none" stroke="#555" stroke-width="1.2"/><path d="M4 4 L11.5 11.5 M6.5 11.5 H11.5 V6.5" fill="none" stroke="#555" stroke-width="1.3"/></svg>
<svg style="left:519.5px;top:214.5px" width="14" height="13"><path d="M1 11.5 V1 H11.5" fill="none" stroke="#555" stroke-width="1.2"/><path d="M4 4 L11.5 11.5 M6.5 11.5 H11.5 V6.5" fill="none" stroke="#555" stroke-width="1.3"/></svg>
<svg style="left:665.5px;top:214.5px" width="14" height="13"><path d="M1 11.5 V1 H11.5" fill="none" stroke="#555" stroke-width="1.2"/><path d="M4 4 L11.5 11.5 M6.5 11.5 H11.5 V6.5" fill="none" stroke="#555" stroke-width="1.3"/></svg>
<div class="t" style="left:15.00px;top:154.00px;font-size:18.5px;line-height:18.5px;color:#444;transform:scaleX(0.8436);">Paste</div>
<div class="t" style="left:728.70px;top:103.00px;font-size:18.5px;line-height:18.5px;color:#444;transform:scaleX(0.9769);">Conditional Formatting</div>
<div class="t" style="left:728.70px;top:137.00px;font-size:18.5px;line-height:18.5px;color:#444;transform:scaleX(0.9305);">Format as Table</div>
<div class="t" style="left:728.30px;top:171.00px;font-size:18.5px;line-height:18.5px;color:#444;transform:scaleX(0.8787);">Cell Styles</div>
<div class="t" style="left:995.00px;top:103.00px;font-size:18.5px;line-height:18.5px;color:#444;transform:scaleX(0.9158);">Insert</div>
<div class="t" style="left:995.00px;top:137.00px;font-size:18.5px;line-height:18.5px;color:#444;transform:scaleX(0.9121);">Delete</div>
<div class="t" style="left:995.00px;top:171.00px;font-size:18.5px;line-height:18.5px;color:#444;transform:scaleX(0.9505);">Format</div>
<div class="t" style="left:1236.30px;top:153.00px;font-size:18.5px;line-height:18.5px;color:#444;transform:scaleX(0.9210);">Analyze</div>
<div class="t" style="left:1249.20px;top:177.00px;font-size:18.5px;line-height:18.5px;color:#444;transform:scaleX(0.8951);">Data</div>
<div class="t" style="left:1328.30px;top:153.00px;font-size:18.5px;line-height:18.5px;color:#b4b4b4;transform:scaleX(0.9352);">Sensitivity</div>
<div class="t" style="left:1438.50px;top:153.00px;font-size:18.5px;line-height:18.5px;color:#444;transform:scaleX(0.9330);">Add-ins</div>
<div class="t" style="left:1544.10px;top:153.00px;font-size:18.5px;line-height:18.5px;color:#444;transform:scaleX(0.8833);">Create PDF</div>
<div class="t" style="left:1532.40px;top:177.00px;font-size:18.5px;line-height:18.5px;color:#444;transform:scaleX(0.9290);">and Share link</div>
<div class="t" style="left:1660.20px;top:153.00px;font-size:18.5px;line-height:18.5px;color:#444;transform:scaleX(0.9013);">Create PDF and</div>
<div class="t" style="left:1650.20px;top:177.00px;font-size:18.5px;line-height:18.5px;color:#444;transform:scaleX(0.9551);">Share via Outlook</div>
<svg style="left:29px;top:182px" width="11" height="7"><path d="M1 1 L5.5 6 L10 1" fill="none" stroke="#444" stroke-width="1.4"/></svg>
<svg style="left:102.8px;top:147px" width="11" height="7"><path d="M1 1 L5.5 6 L10 1" fill="none" stroke="#444" stroke-width="1.4"/></svg>
<svg style="left:250.6px;top:146.8px" width="11" height="7"><path d="M1 1 L5.5 6 L10 1" fill="none" stroke="#444" stroke-width="1.4"/></svg>
<svg style="left:183px;top:182.6px" width="11" height="7"><path d="M1 1 L5.5 6 L10 1" fill="none" stroke="#444" stroke-width="1.4"/></svg>
<svg style="left:246px;top:183px" width="11" height="7"><path d="M1 1 L5.5 6 L10 1" fill="none" stroke="#444" stroke-width="1.4"/></svg>
<svg style="left:302px;top:183px" width="11" height="7"><path d="M1 1 L5.5 6 L10 1" fill="none" stroke="#444" stroke-width="1.4"/></svg>
<svg style="left:475px;top:183px" width="11" height="7"><path d="M1 1 L5.5 6 L10 1" fill="none" stroke="#444" stroke-width="1.4"/></svg>
<svg style="left:586.8px;top:149px" width="11" height="7"><path d="M1 1 L5.5 6 L10 1" fill="none" stroke="#444" stroke-width="1.4"/></svg>
<svg style="left:917.4px;top:106.8px" width="11" height="7"><path d="M1 1 L5.5 6 L10 1" fill="none" stroke="#444" stroke-width="1.4"/></svg>
<svg style="left:857.9px;top:141.3px" width="11" height="7"><path d="M1 1 L5.5 6 L10 1" fill="none" stroke="#444" stroke-width="1.4"/></svg>
<svg style="left:811.2px;top:175.5px" width="11" height="7"><path d="M1 1 L5.5 6 L10 1" fill="none" stroke="#444" stroke-width="1.4"/></svg>
<svg style="left:1052px;top:107.7px" width="11" height="7"><path d="M1 1 L5.5 6 L10 1" fill="none" stroke="#444" stroke-width="1.4"/></svg>
<svg style="left:1057.9px;top:141.8px" width="11" height="7"><path d="M1 1 L5.5 6 L10 1" fill="none" stroke="#444" stroke-width="1.4"/></svg>
<svg style="left:1055.7px;top:175.5px" width="11" height="7"><path d="M1 1 L5.5 6 L10 1" fill="none" stroke="#444" stroke-width="1.4"/></svg>
<svg style="left:1138.2px;top:107.8px" width="11" height="7"><path d="M1 1 L5.5 6 L10 1" fill="none" stroke="#444" stroke-width="1.4"/></svg>
<svg style="left:1190.3px;top:107.8px" width="11" height="7"><path d="M1 1 L5.5 6 L10 1" fill="none" stroke="#444" stroke-width="1.4"/></svg>
<svg style="left:1134.3px;top:142px" width="11" height="7"><path d="M1 1 L5.5 6 L10 1" fill="none" stroke="#444" stroke-width="1.4"/></svg>
<svg style="left:1190.3px;top:142px" width="11" height="7"><path d="M1 1 L5.5 6 L10 1" fill="none" stroke="#444" stroke-width="1.4"/></svg>
<svg style="left:1134.3px;top:176.1px" width="11" height="7"><path d="M1 1 L5.5 6 L10 1" fill="none" stroke="#444" stroke-width="1.4"/></svg>
<svg style="left:1362.2px;top:181.2px" width="10" height="7"><path d="M1 1 L5.0 6 L9 1" fill="none" stroke="#b4b4b4" stroke-width="1.4"/></svg>
<svg style="left:1884px;top:218px" width="17" height="11"><path d="M1.5 9 L8 2.5 L14.5 9" fill="none" stroke="#444" stroke-width="1.5"/></svg>
<div style="left:146px;top:96px;width:131px;height:35px;background:#fff;border:1px solid #c6c6c6;box-sizing:border-box"></div>
<div style="left:279px;top:96px;width:64px;height:35px;background:#fff;border:1px solid #c6c6c6;box-sizing:border-box"></div>
<div style="left:550px;top:96px;width:122px;height:35px;background:#fff;border:1px solid #c6c6c6;box-sizing:border-box"></div>
<div class="t" style="left:149.70px;top:106.00px;font-size:18.5px;line-height:18.5px;color:#222;transform:scaleX(0.9103);">Calibri</div>
<div class="t" style="left:283.70px;top:106.00px;font-size:18.5px;line-height:18.5px;color:#222;transform:scaleX(0.8447);">12</div>
<div class="t" style="left:553.40px;top:106.00px;font-size:18.5px;line-height:18.5px;color:#222;transform:scaleX(0.8815);">General</div>
<svg style="left:262.9px;top:110.5px" width="10" height="7"><path d="M1 1 L5.0 6 L9 1" fill="none" stroke="#333" stroke-width="1.5"/></svg>
<svg style="left:329px;top:110.5px" width="10" height="7"><path d="M1 1 L5.0 6 L9 1" fill="none" stroke="#333" stroke-width="1.5"/></svg>
<svg style="left:658.2px;top:110.5px" width="10" height="7"><path d="M1 1 L5.0 6 L9 1" fill="none" stroke="#333" stroke-width="1.5"/></svg>
<svg style="left:15px;top:98px" width="48" height="50" viewBox="0 0 48 50"><rect x="3.5" y="9" width="31.5" height="35.5" fill="#fbdc9c" stroke="#e3751c" stroke-width="1.6"/><rect x="8" y="12" width="26" height="29" fill="#f7f7f7"/><path d="M10.5 14 V8.5 H15.5 C15.5 3 24.5 3 24.5 8.5 H29 V14 Z" fill="#f7f7f7" stroke="#7a7a7a" stroke-width="1.6"/><rect x="23.8" y="21.8" width="19.5" height="25.5" fill="#f9f9f9" stroke="#444" stroke-width="1.6"/></svg>
<svg style="left:73px;top:100px" width="19" height="27" viewBox="0 0 19 27"><path d="M4.5 1 L13 19.5 M14 1 L5.5 19.5" stroke="#444" stroke-width="1.3" fill="none"/><circle cx="4.5" cy="22" r="2.6" fill="none" stroke="#1e88d4" stroke-width="1.5"/><circle cx="14" cy="22" r="2.6" fill="none" stroke="#1e88d4" stroke-width="1.5"/></svg>
<svg style="left:69px;top:136px" width="27" height="27" viewBox="0 0 27 27"><path d="M1.5 1.5 H9.5 L12 4 M1.5 1.5 V20.5 H9.5" fill="none" stroke="#444" stroke-width="1.5"/><path d="M9.5 5.5 H19 L24.5 11 V24.5 H9.5 Z" fill="#f9f9f9" stroke="#444" stroke-width="1.5"/><path d="M18.5 5.5 V11.5 H24.5 M13 16 H21 M13 19.5 H21" fill="none" stroke="#444" stroke-width="1.3"/></svg>
<svg style="left:69px;top:171px" width="27" height="27" viewBox="0 0 27 27"><path d="M3 17 L10.5 11 L17 18.5 L11.5 25 Z" fill="#fbdc9c" stroke="#e3751c" stroke-width="1.6" stroke-linejoin="round"/><path d="M10.5 11 C13 14 14 16 17 18.5 L14 21.5 L7.5 14 Z" fill="#f7f7f7"/><path d="M10 12 L15.5 8 L20 13 L16.5 18.5 Z" fill="#f7f7f7" stroke="#444" stroke-width="1.5" stroke-linejoin="round"/><path d="M16 9 L21 3 C22.5 1.5 25.5 4 24 6 L19 11.5" fill="#f7f7f7" stroke="#444" stroke-width="1.5"/></svg>
<div style="left:146px;top:133px;width:32px;height:34px;background:#c8c8c8;border:1px solid #9c9c9c;box-sizing:border-box"></div>
<div class="t" style="left:156.70px;top:138.00px;font-size:20px;line-height:20px;color:#444; font-weight:700;transform:scaleX(0.7917);">B</div>
<div class="t" style="left:190px;top:138px;font-family:'Liberation Serif',serif;font-style:italic;font-size:21px;line-height:21px;color:#444">I</div>
<div class="t" style="left:223.70px;top:138.00px;font-size:20px;line-height:20px;color:#444;transform:scaleX(0.7847);">U</div>
<div style="left:222px;top:156px;width:14px;height:2px;background:#444"></div>
<div style="left:272px;top:134px;width:1px;height:32px;background:#c4c4c4"></div>
<div style="left:204px;top:170px;width:1px;height:32px;background:#c4c4c4"></div>
<div class="t" style="left:282.70px;top:136.00px;font-size:24px;line-height:24px;color:#444;">A</div>
<svg style="left:296px;top:136px" width="10" height="8" viewBox="0 0 10 8"><path d="M1.5 6 L5 2 L8.5 6" fill="none" stroke="#1e88d4" stroke-width="1.8"/></svg>
<div class="t" style="left:319.00px;top:139.00px;font-size:20px;line-height:20px;color:#444;transform:scaleX(0.9478);">A</div>
<svg style="left:331px;top:137px" width="10" height="8" viewBox="0 0 10 8"><path d="M1.5 2 L5 6 L8.5 2" fill="none" stroke="#1e88d4" stroke-width="1.8"/></svg>
<svg style="left:149px;top:172px" width="25" height="25" viewBox="0 0 25 25"><path d="M1.5 1.5 H22.5 V21 M1.5 1.5 V21 M12 1.5 V21 M1.5 11.5 H22.5" fill="none" stroke="#444" stroke-width="1.2" stroke-dasharray="1.3 1.6"/><path d="M1 22.8 H23.5" stroke="#111" stroke-width="1.6"/></svg>
<svg style="left:212px;top:172px" width="26" height="26" viewBox="0 0 26 26"><path d="M4.5 11 L11.5 4 L20 12.5 L13 19.5 Z" fill="#f7f7f7" stroke="#444" stroke-width="1.4" stroke-linejoin="round"/><path d="M11.5 10 V2.5 C11.5 1 14 1 14 2.5 V9" fill="none" stroke="#444" stroke-width="1.3"/><path d="M18.5 7.5 C21 7 22.5 9.5 22 14" fill="none" stroke="#1060b0" stroke-width="2.2"/></svg>
<div style="left:213px;top:191px;width:24px;height:6px;background:#ffff00"></div>
<div class="t" style="left:274.40px;top:171.00px;font-size:23px;line-height:23px;color:#444;transform:scaleX(0.9020);">A</div>
<div style="left:269px;top:191px;width:24px;height:6px;background:#ff0000"></div>
<div style="left:401px;top:97px;width:32px;height:34px;background:#d0d0d0;border:1px solid #a0a0a0;box-sizing:border-box"></div>
<div style="left:470px;top:97px;width:32px;height:34px;background:#d0d0d0;border:1px solid #a0a0a0;box-sizing:border-box"></div>
<div style="left:367px;top:133px;width:32px;height:34px;background:#d0d0d0;border:1px solid #a0a0a0;box-sizing:border-box"></div>
<div style="left:470px;top:133px;width:56px;height:34px;background:#d0d0d0;border:1px solid #a0a0a0;box-sizing:border-box"></div>
<svg style="left:0;top:0" width="540" height="205"><path d="M372.3 101.4 H393.6" stroke="#444" stroke-width="1.4"/><path d="M375.8 107.6 H390.8" stroke="#444" stroke-width="1.4"/><path d="M372.3 113.7 H393.6" stroke="#444" stroke-width="1.4"/><path d="M406.3 106.1 H427.7" stroke="#444" stroke-width="1.4"/><path d="M409.3 112.2 H424.6" stroke="#444" stroke-width="1.4"/><path d="M406.3 118 H427.7" stroke="#444" stroke-width="1.4"/><path d="M440.3 112.2 H461.7" stroke="#444" stroke-width="1.4"/><path d="M443.8 118.1 H458.4" stroke="#444" stroke-width="1.4"/><path d="M440.3 124 H461.7" stroke="#444" stroke-width="1.4"/><path d="M372.3 139.1 H393.6" stroke="#444" stroke-width="1.4"/><path d="M372.3 145.2 H387.7" stroke="#444" stroke-width="1.4"/><path d="M372.3 151.1 H393.6" stroke="#444" stroke-width="1.4"/><path d="M372.3 157.1 H387.7" stroke="#444" stroke-width="1.4"/><path d="M406.3 139.1 H427.7" stroke="#444" stroke-width="1.4"/><path d="M409.7 145.2 H424.6" stroke="#444" stroke-width="1.4"/><path d="M406.3 151.1 H427.7" stroke="#444" stroke-width="1.4"/><path d="M409.7 157.1 H424.6" stroke="#444" stroke-width="1.4"/><path d="M440.3 139.1 H461.7" stroke="#444" stroke-width="1.4"/><path d="M446.3 145.2 H461.7" stroke="#444" stroke-width="1.4"/><path d="M440.3 151.1 H461.7" stroke="#444" stroke-width="1.4"/><path d="M446.3 157.1 H461.7" stroke="#444" stroke-width="1.4"/><path d="M372.3 175 H393.6" stroke="#444" stroke-width="1.4"/><path d="M385 181.1 H393.6" stroke="#444" stroke-width="1.4"/><path d="M385 187 H393.6" stroke="#444" stroke-width="1.4"/><path d="M372.3 193 H393.6" stroke="#444" stroke-width="1.4"/><path d="M406.3 175 H427.7" stroke="#444" stroke-width="1.4"/><path d="M418.6 181.1 H427.7" stroke="#444" stroke-width="1.4"/><path d="M418.6 187 H427.7" stroke="#444" stroke-width="1.4"/><path d="M406.3 193 H427.7" stroke="#444" stroke-width="1.4"/></svg>
<svg style="left:370px;top:176px" width="48" height="16" viewBox="0 0 48 16"><path d="M11 8 H2.5 M6.5 4 L2.5 8 L6.5 12" fill="none" stroke="#1e88d4" stroke-width="1.6"/><path d="M36.5 8 H45 M41 4 L45 8 L41 12" fill="none" stroke="#1e88d4" stroke-width="1.6"/></svg>
<div style="left:437px;top:170px;width:1px;height:32px;background:#c4c4c4"></div>
<div class="t" style="left:477px;top:97px;font-size:15px;line-height:15px;color:#444;letter-spacing:-0.5px">ab</div>
<div class="t" style="left:477px;top:108px;font-size:15px;line-height:15px;color:#444">c</div>
<svg style="left:485px;top:111px" width="16" height="14" viewBox="0 0 16 14"><path d="M13 1 C14.5 6 12 9 5 9" fill="none" stroke="#1565c0" stroke-width="1.8"/><path d="M8 5 L3.5 9 L8 13" fill="none" stroke="#1565c0" stroke-width="1.8"/></svg>
<svg style="left:473px;top:136px" width="25" height="25" viewBox="0 0 25 25"><rect x="1.5" y="1.5" width="22" height="21.5" fill="#ececec" stroke="#444" stroke-width="1.5"/><path d="M12.4 1.5 V23" stroke="#444" stroke-width="1.4"/><rect x="1.5" y="6" width="22" height="12.5" fill="#ececec" stroke="#1565c0" stroke-width="1.6"/><path d="M5 12.2 H20 M8 9.2 L5 12.2 L8 15.2 M17 9.2 L20 12.2 L17 15.2" fill="none" stroke="#1565c0" stroke-width="1.5"/></svg>
<svg style="left:507.2px;top:147.3px" width="10" height="7"><path d="M1 1 L5.0 6 L9 1" fill="none" stroke="#444" stroke-width="1.4"/></svg>
<div class="t" style="left:444px;top:172px;font-size:15px;line-height:15px;color:#444;transform:rotate(-45deg);transform-origin:50% 50%">ab</div>
<svg style="left:452px;top:177px" width="20" height="20" viewBox="0 0 20 20"><path d="M2 18 L17.5 2.5 M11 2.5 H17.5 V9" fill="none" stroke="#1e88d4" stroke-width="1.5"/></svg>
<svg style="left:557px;top:136px" width="16" height="27" viewBox="0 0 16 27"><path d="M13 6.5 C12 4 10 3 8 3 C5 3 3 4.8 3 7.3 C3 13 13.5 11.5 13.5 17.8 C13.5 20.6 11.3 22.6 8 22.6 C5 22.6 3 21 2.3 18.5 M8 0 V3 M8 22.6 V26.5" fill="none" stroke="#444" stroke-width="1.7"/></svg>
<svg style="left:609px;top:137px" width="26" height="25" viewBox="0 0 26 25"><circle cx="6.5" cy="7" r="4" fill="none" stroke="#444" stroke-width="1.6"/><circle cx="19.5" cy="18.5" r="4" fill="none" stroke="#444" stroke-width="1.6"/><path d="M22.5 1.5 L6 23" stroke="#444" stroke-width="1.6"/></svg>
<svg style="left:552px;top:173px" width="62" height="26" viewBox="0 0 62 26"><path d="M15.5 6.5 H2.5 M7 2 L2.5 6.5 L7 11" fill="none" stroke="#1e88d4" stroke-width="1.6"/><path d="M36 18.5 H49.5 M45 14 L49.5 18.5 L45 23" fill="none" stroke="#1e88d4" stroke-width="1.6"/></svg>
<svg style="left:650px;top:140px" width="14" height="19" viewBox="0 0 14 19"><path d="M7 1 C10.5 1 13 3.5 13 7 C13 12 9 16.5 2.5 18.5 L2 17 C6 15 8 13 8.2 11.5 C4.5 11.5 2 9.5 2 6.5 C2 3.2 4.2 1 7 1 Z" fill="#333"/></svg>
<div class="t" style="left:570.00px;top:172.00px;font-size:14.5px;line-height:14.5px;color:#444;transform:scaleX(0.8642);">0</div>
<div class="t" style="left:557.50px;top:184.00px;font-size:14.5px;line-height:14.5px;color:#444;transform:scaleX(0.9653);">.00</div>
<div class="t" style="left:592.00px;top:172.00px;font-size:14.5px;line-height:14.5px;color:#444;transform:scaleX(0.9406);">.00</div>
<div class="t" style="left:600.00px;top:184.00px;font-size:14.5px;line-height:14.5px;color:#444;transform:scaleX(0.9091);">.0</div>
<svg style="left:700px;top:99px" width="24" height="21" viewBox="0 0 24 21"><rect x="0.75" y="0.75" width="22.5" height="19.5" fill="#f7f7f7" stroke="#444" stroke-width="1.5"/><path d="M8 0.75 V20.25" stroke="#444" stroke-width="1.3"/><path d="M16 0.75 V20.25" stroke="#444" stroke-width="1.3"/><path d="M0.75 7 H23.25" stroke="#444" stroke-width="1.3"/><path d="M0.75 14 H23.25" stroke="#444" stroke-width="1.3"/><rect x="5" y="1" width="8" height="6" fill="#f4a3ab" stroke="#e0202e" stroke-width="1.5"/><rect x="5" y="7" width="4" height="7" fill="#8ab8e8" stroke="#1565c0" stroke-width="1.2"/><rect x="5" y="14" width="11" height="6" fill="#f4a3ab" stroke="#e0202e" stroke-width="1.5"/></svg>
<svg style="left:700px;top:134px" width="24" height="21" viewBox="0 0 24 21"><rect x="0.75" y="0.75" width="22.5" height="19.5" fill="#f7f7f7" stroke="#444" stroke-width="1.5"/><path d="M8 0.75 V20.25" stroke="#444" stroke-width="1.3"/><path d="M16 0.75 V20.25" stroke="#444" stroke-width="1.3"/><path d="M0.75 7 H23.25" stroke="#444" stroke-width="1.3"/><path d="M0.75 14 H23.25" stroke="#444" stroke-width="1.3"/><path d="M8 7 H23.2 V20.2 H8 Z" fill="#8ab8e8"/><path d="M3 20 C5 16 8 15 9 17 L20 5 C21 4 23 5 22 6.5 L11 18.5 C11 21 6 21.5 3 20 Z" fill="#fff" stroke="#444" stroke-width="1.1"/><path d="M3 20.5 C5 17 8 16 9.5 18 C9 20.5 6 21.5 3 20.5 Z" fill="#1e88d4"/></svg>
<svg style="left:700px;top:168px" width="24" height="21" viewBox="0 0 24 21"><rect x="0.75" y="0.75" width="22.5" height="19.5" fill="#f7f7f7" stroke="#444" stroke-width="1.5"/><path d="M8 0.75 V20.25" stroke="#444" stroke-width="1.3"/><path d="M16 0.75 V20.25" stroke="#444" stroke-width="1.3"/><path d="M0.75 7 H23.25" stroke="#444" stroke-width="1.3"/><path d="M0.75 14 H23.25" stroke="#444" stroke-width="1.3"/><path d="M5 4 H23.2 V20.2 H5 Z" fill="#8ab8e8" stroke="#1565c0" stroke-width="1.2"/><path d="M3 20 C5 16 8 15 9 17 L20 5 C21 4 23 5 22 6.5 L11 18.5 C11 21 6 21.5 3 20 Z" fill="#fff" stroke="#444" stroke-width="1.1"/><path d="M3 20.5 C5 17 8 16 9.5 18 C9 20.5 6 21.5 3 20.5 Z" fill="#1e88d4"/></svg>
<svg style="left:966px;top:99px" width="24" height="21" viewBox="0 0 24 21"><rect x="0.75" y="0.75" width="22.5" height="19.5" fill="#f7f7f7" stroke="#444" stroke-width="1.5"/><path d="M8 0.75 V20.25" stroke="#444" stroke-width="1.3"/><path d="M16 0.75 V20.25" stroke="#444" stroke-width="1.3"/><path d="M0.75 7 H23.25" stroke="#444" stroke-width="1.3"/><path d="M0.75 14 H23.25" stroke="#444" stroke-width="1.3"/><rect x="8" y="6.5" width="15.2" height="8" fill="#8ab8e8" stroke="#1565c0" stroke-width="1.6"/><path d="M16 7 V14" stroke="#1565c0" stroke-width="1.2"/><path d="M14 10.5 H2 M6 6.5 L2 10.5 L6 14.5" fill="none" stroke="#1e88d4" stroke-width="1.6"/></svg>
<svg style="left:966px;top:133px" width="24" height="22" viewBox="0 0 24 22"><path d="M0.75 0.75 H23.25 M0.75 0.75 V6 M8 0.75 V6 M16 0.75 V6 M23.25 0.75 V6 M0.75 6 H23.25 M0.75 15 H23.25 V20.5 H0.75 Z M8 15 V20.5 M16 15 V20.5" fill="#f7f7f7" stroke="#444" stroke-width="1.4"/><rect x="4.5" y="6.5" width="8.5" height="8" fill="#8ab8e8" stroke="#1565c0" stroke-width="1.6"/><path d="M16 6.5 L23 14.5 M23 6.5 L16 14.5" stroke="#e8303a" stroke-width="1.7"/></svg>
<svg style="left:966px;top:165px" width="24" height="6" viewBox="0 0 24 6"><path d="M5 0.5 V5 M19.5 0.5 V5 M5 2.8 H19.5" stroke="#1e88d4" stroke-width="1.6"/></svg>
<svg style="left:966px;top:169px" width="24" height="21" viewBox="0 0 24 21"><rect x="0.75" y="0.75" width="22.5" height="19.5" fill="#f7f7f7" stroke="#444" stroke-width="1.5"/><path d="M6 0.75 V20.25" stroke="#444" stroke-width="1.3"/><path d="M18 0.75 V20.25" stroke="#444" stroke-width="1.3"/><path d="M0.75 7 H23.25" stroke="#444" stroke-width="1.3"/><path d="M0.75 14 H23.25" stroke="#444" stroke-width="1.3"/><rect x="6" y="5" width="12" height="10" fill="#8ab8e8" stroke="#1565c0" stroke-width="1.6"/></svg>
<svg style="left:1107px;top:99px" width="21" height="23" viewBox="0 0 21 23"><path d="M18.5 4 V1 H1.5 L11 10.8 L1.5 20.5 H18.5 V17.5" fill="none" stroke="#333" stroke-width="1.7" stroke-linejoin="miter"/></svg>
<div class="t" style="left:1161.00px;top:97.00px;font-size:14px;line-height:14px;color:#1e88d4; font-weight:700;transform:scaleX(0.9208);">A</div>
<div class="t" style="left:1161.00px;top:110.00px;font-size:14px;line-height:14px;color:#333; font-weight:700;transform:scaleX(1.0465);">Z</div>
<svg style="left:1171px;top:103px" width="15" height="15" viewBox="0 0 15 15"><path d="M1 1 H13.5 V3 L9 8 V13.5 H5.5 V8 L1 3 Z" fill="#f7f7f7" stroke="#333" stroke-width="1.4" stroke-linejoin="round"/></svg>
<svg style="left:1105px;top:133px" width="25" height="22" viewBox="0 0 25 22"><rect x="0.9" y="0.9" width="23" height="20" fill="#f9f9f9" stroke="#333" stroke-width="1.6"/><path d="M0.9 4 H24" stroke="#333" stroke-width="1.4"/><path d="M12 6.5 V17.5 M7.5 13 L12 17.5 L16.5 13" fill="none" stroke="#1e88d4" stroke-width="1.7"/></svg>
<svg style="left:1161px;top:131px" width="25" height="26" viewBox="0 0 25 26"><circle cx="15.7" cy="9" r="7.6" fill="#f9f9f9" stroke="#333" stroke-width="1.6"/><path d="M10.3 14.5 L1.5 23.3" stroke="#333" stroke-width="1.6"/></svg>
<svg style="left:1104px;top:165px" width="26" height="26" viewBox="0 0 26 26"><path d="M1.6 16 L16 1.8 L23.8 9.7 L9.4 24.2 Z" fill="#f9f9f9" stroke="#9b2fae" stroke-width="1.6" stroke-linejoin="round"/><path d="M1.6 16 L8 11.8 L14.2 18.4 L9.4 24.2 Z" fill="#d48ad9" stroke="#9b2fae" stroke-width="1.5" stroke-linejoin="round"/></svg>
<svg style="left:1242px;top:97px" width="50" height="50" viewBox="0 0 50 50"><rect x="1.1" y="1.3" width="47.8" height="47" fill="#f9f9f9" stroke="#333" stroke-width="2"/><rect x="2" y="2.3" width="46" height="6" fill="#c4c4c4"/><path d="M2 22 H48 M2 34.5 H48 M17.3 34.5 V48 M32.6 34.5 V48" stroke="#bdbdbd" stroke-width="1.4"/><circle cx="23.3" cy="21.4" r="14.6" fill="#f9f9f9" stroke="#333" stroke-width="2"/><path d="M33.5 32 L48 47.5" stroke="#333" stroke-width="2"/><rect x="15" y="18.5" width="5" height="9" fill="#c4c4c4" stroke="#666" stroke-width="0.8"/><rect x="20" y="12" width="6" height="15.5" fill="#fff" stroke="#333" stroke-width="1.2"/><rect x="26" y="15.5" width="5" height="12" fill="#8ab8e8" stroke="#1565c0" stroke-width="1.2"/></svg>
<svg style="left:1350px;top:95px" width="44" height="50" viewBox="0 0 44 50"><path d="M1.5 7 H17 M1.5 7 V47 H32.5 V28" fill="#ececec" stroke="#c4c4c4" stroke-width="1.8"/><rect x="1.5" y="7" width="31" height="40" fill="#ececec" stroke="#c4c4c4" stroke-width="1.8"/><g transform="rotate(-45 25 22)"><rect x="9" y="18" width="26" height="8" fill="#ececec" stroke="#c4c4c4" stroke-width="1.8"/><rect x="12" y="20" width="20" height="4" fill="none" stroke="#c4c4c4" stroke-width="1.2"/><rect x="35" y="16" width="4" height="12" fill="#c4c4c4"/><path d="M39 16 H47 L50 22 L47 28 H39 Z" fill="#ececec" stroke="#c4c4c4" stroke-width="1.8"/></g></svg>
<svg style="left:1448px;top:100px" width="44" height="44" viewBox="0 0 44 44"><rect x="1.6" y="1.6" width="40.5" height="40.8" fill="none" stroke="#d83b01" stroke-width="2"/><rect x="6.8" y="6.8" width="13.5" height="13.2" fill="none" stroke="#d83b01" stroke-width="2"/><rect x="24.5" y="6.8" width="13.5" height="13.2" fill="none" stroke="#d83b01" stroke-width="2"/><rect x="6.8" y="24.5" width="13.5" height="13.2" fill="none" stroke="#d83b01" stroke-width="2"/><rect x="24.5" y="24.5" width="13.5" height="13.2" fill="none" stroke="#d83b01" stroke-width="2"/></svg>
<svg style="left:1573px;top:102px" width="42" height="46" viewBox="0 0 42 46"><path d="M6 1.5 H22 L28.5 8 V27 M14 35.5 H6 C3.5 35.5 1.5 33.5 1.5 31 V6 C1.5 3.5 3.5 1.5 6 1.5" fill="none" stroke="#2a6ee0" stroke-width="1.8" stroke-linejoin="round"/><path d="M7 21 C9 17 12 11 12 8 C12 6 10.5 6 10.5 8 C10.5 11 14 17 20 18 C22 18.5 22 16.5 20 16.5 C16 16.5 11 18.5 7 21 Z" fill="none" stroke="#2a6ee0" stroke-width="1.1"/><g fill="none" stroke="#2a6ee0" stroke-width="2.2"><rect x="19" y="31" width="14" height="8" rx="4" transform="rotate(-45 26 35)"/><rect x="25" y="25" width="14" height="8" rx="4" transform="rotate(-45 32 29)"/></g></svg>
<svg style="left:1706px;top:102px" width="42" height="46" viewBox="0 0 42 46"><path d="M6 1.5 H22 L28.5 8 V27 M14 35.5 H6 C3.5 35.5 1.5 33.5 1.5 31 V6 C1.5 3.5 3.5 1.5 6 1.5" fill="none" stroke="#2a6ee0" stroke-width="1.8" stroke-linejoin="round"/><path d="M7 21 C9 17 12 11 12 8 C12 6 10.5 6 10.5 8 C10.5 11 14 17 20 18 C22 18.5 22 16.5 20 16.5 C16 16.5 11 18.5 7 21 Z" fill="none" stroke="#2a6ee0" stroke-width="1.1"/><rect x="17" y="25.5" width="22" height="16" rx="2" fill="#f3f2f1" stroke="#2a6ee0" stroke-width="1.9"/><path d="M17.5 27 L28 34.5 L38.5 27" fill="none" stroke="#2a6ee0" stroke-width="1.7"/></svg>
</body></html>
